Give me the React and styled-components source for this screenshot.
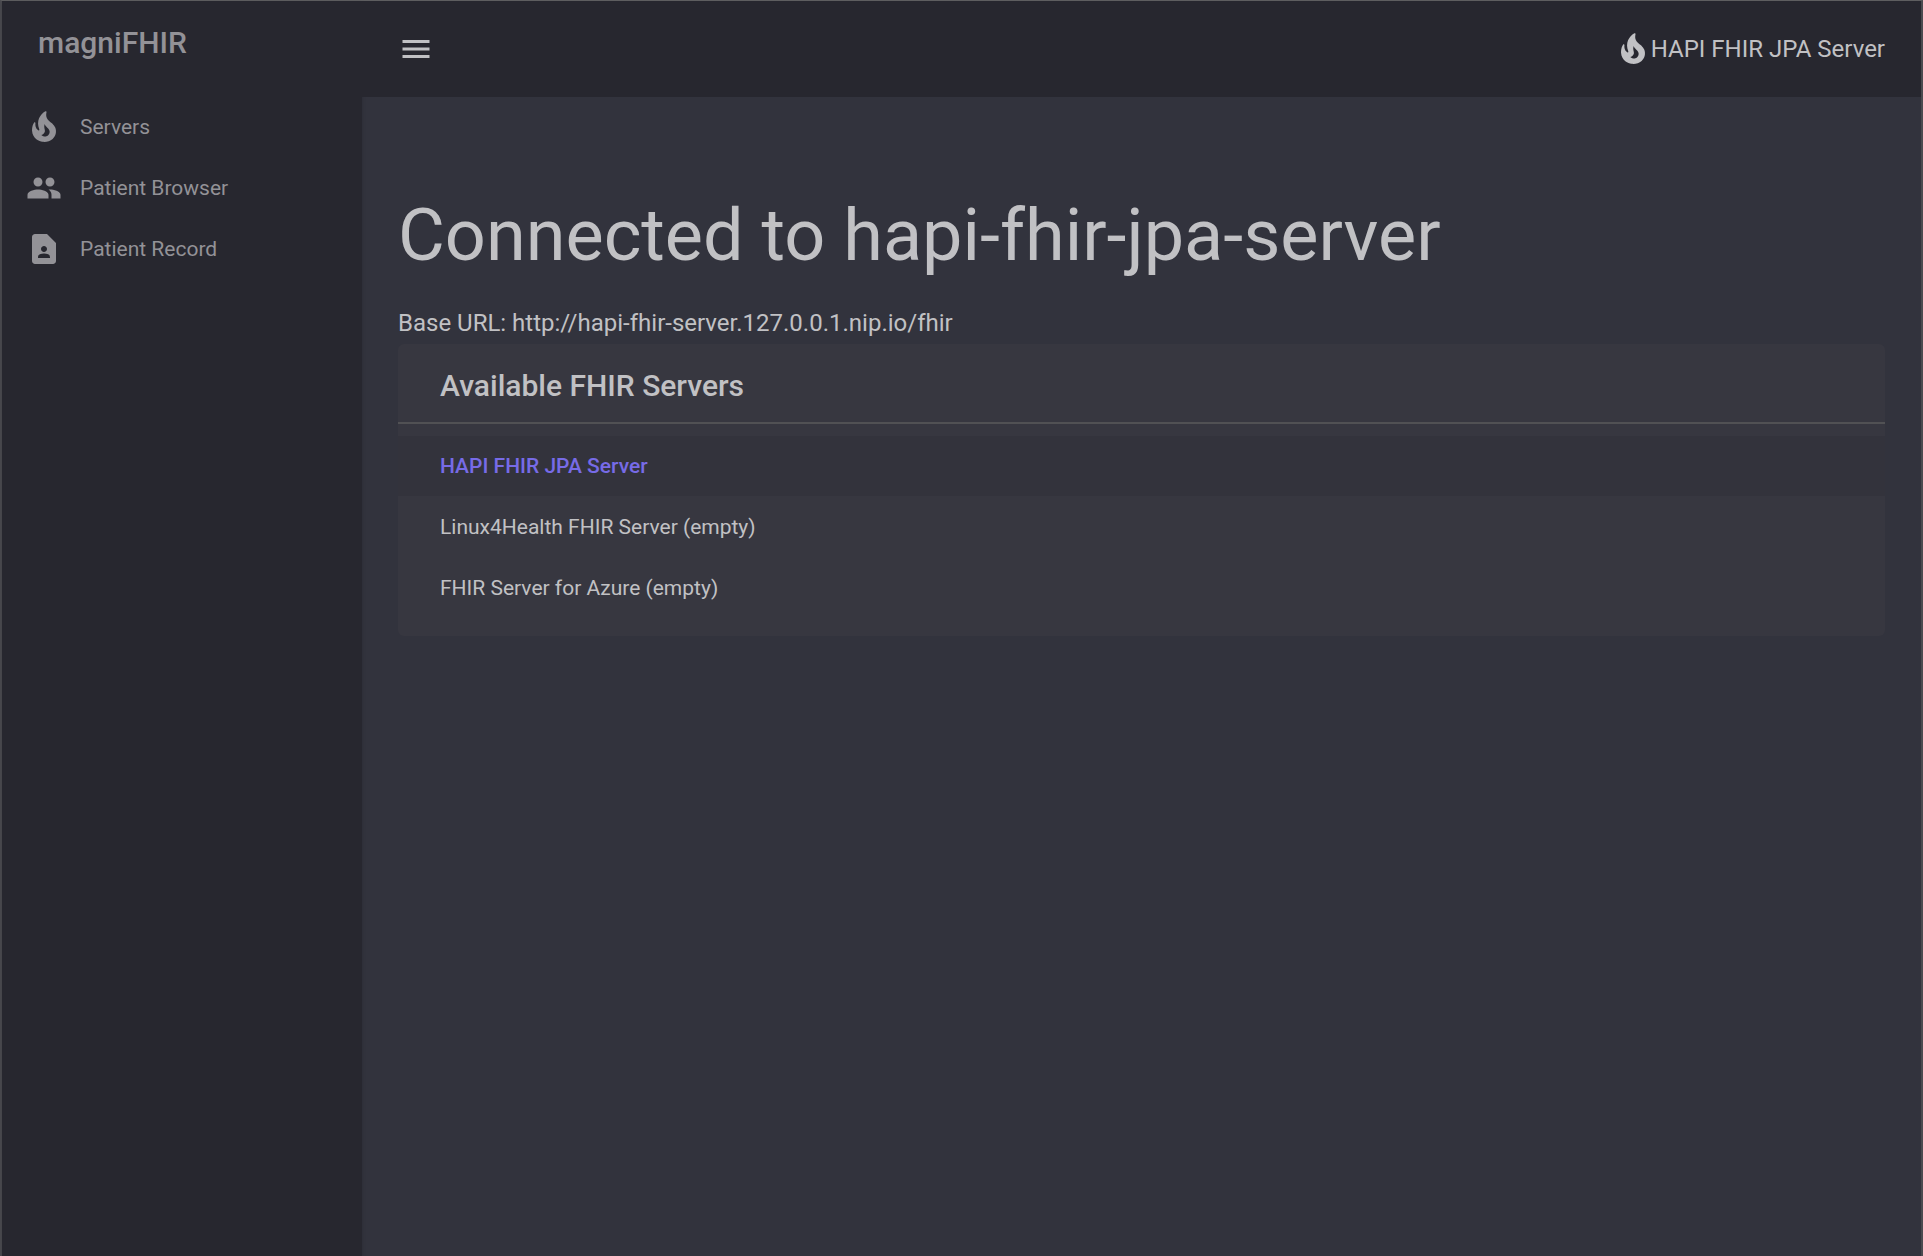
import React from "react";
import styled, { createGlobalStyle } from "styled-components";
import { MdPeople, MdContactPage, MdMenu } from "react-icons/md";

const GlobalStyle = createGlobalStyle`
  *, *::before, *::after { box-sizing: border-box; }
  body {
    margin: 0;
    background: #32333d;
    color: #c1c1c4;
    font-family: Roboto, "Liberation Sans", sans-serif;
    font-size: 24px;
    line-height: 36px;
  }
  h1, h2, p, ul { margin: 0; padding: 0; }
  ul { list-style: none; }
`;

const Shell = styled.div`
  display: flex;
  min-height: 100vh;
  border: solid #4a4a4f;
  border-width: 1px 2px 0;
  border-top-color: #5e5e60;
`;

const Drawer = styled.aside`
  flex: 0 0 360px;
  background: #27272f;
  color: #939297;
  box-shadow: 0 2px 4px rgba(0, 0, 0, 0.16);
`;

const Brand = styled.div`
  padding: 18px 36px;
  font-size: 30px;
  font-weight: 500;
  line-height: 48px;
`;

const Nav = styled.nav`
  padding: 11px 0;
`;

const NavLink = styled.a`
  display: flex;
  align-items: center;
  gap: 18px;
  height: 61px;
  padding: 0 24px;
  color: inherit;
  font-size: 21px;
  text-decoration: none;

  svg { width: 36px; height: 36px; }
`;

const Column = styled.div`
  flex: 1;
  min-width: 0;
`;

const AppBar = styled.header`
  position: relative;
  display: flex;
  align-items: center;
  justify-content: space-between;
  height: 96px;
  padding: 0 36px 0 18px;
  background: #27272f;
`;

const MenuButton = styled.button`
  display: flex;
  padding: 18px;
  border: 0;
  background: none;
  color: inherit;

  svg { width: 36px; height: 36px; }
`;

const CurrentServer = styled.div`
  display: flex;
  align-items: center;

  svg { width: 36px; height: 36px; }
`;

const Content = styled.main`
  padding: 96px 36px;
`;

const Title = styled.h1`
  margin-bottom: 26px;
  font-size: 72px;
  font-weight: 400;
  line-height: 86px;
`;

const Panel = styled.section`
  margin-top: 3px;
  border-radius: 6px;
  background: #373740;
`;

const PanelTitle = styled.h2`
  padding: 18px 42px 12px;
  border-bottom: 2px solid #515154;
  font-size: 30px;
  font-weight: 500;
  line-height: 48px;
`;

const ServerList = styled.ul`
  display: grid;
  gap: 1px;
  padding: 12px 0 18px;
`;

const ServerButton = styled.button`
  display: block;
  width: 100%;
  height: 60px;
  padding: 0 42px;
  border: 0;
  background: ${(p) => (p.$active ? "#33333c" : "none")};
  color: ${(p) => (p.$active ? "#776be7" : "inherit")};
  font: inherit;
  font-size: 21px;
  font-weight: ${(p) => (p.$active ? 500 : 400)};
  text-align: left;
`;

function FireIcon() {
  return (
    <svg viewBox="0 0 24 24" fill="currentColor" aria-hidden="true">
      <path d="M19.48,12.35c-1.57-4.08-7.16-4.3-5.81-10.23c0.1-0.44-0.37-0.78-0.75-0.55C9.29,3.71,6.68,8,8.87,13.62c0.18,0.46-0.36,0.89-0.75,0.59c-1.81-1.37-2-3.34-1.84-4.75c0.06-0.52-0.62-0.77-0.91-0.34C4.69,10.16,4,11.84,4,14.37c0.38,5.6,5.11,7.32,6.81,7.54c2.43,0.31,5.06-0.14,6.95-1.87C19.84,18.11,20.6,15.03,19.48,12.35z M10.2,17.38c1.44-0.35,2.18-1.39,2.38-2.31c0.33-1.43-0.96-2.83-0.09-5.09c0.33,1.87,3.27,3.04,3.27,5.08C15.84,17.59,13.1,19.76,10.2,17.38z" />
    </svg>
  );
}

const NAV = [
  { label: "Servers", Icon: FireIcon },
  { label: "Patient Browser", Icon: MdPeople },
  { label: "Patient Record", Icon: MdContactPage },
];

const SERVERS = [
  "HAPI FHIR JPA Server",
  "Linux4Health FHIR Server (empty)",
  "FHIR Server for Azure (empty)",
];

export default function App() {
  return (
    <>
      <GlobalStyle />
      <Shell>
        <Drawer>
          <Brand>magniFHIR</Brand>
          <Nav>
            {NAV.map(({ label, Icon }) => (
              <NavLink key={label} href="#">
                <Icon aria-hidden="true" />
                {label}
              </NavLink>
            ))}
          </Nav>
        </Drawer>
        <Column>
          <AppBar>
            <MenuButton type="button" aria-label="Toggle menu">
              <MdMenu aria-hidden="true" />
            </MenuButton>
            <CurrentServer>
              <FireIcon />
              {SERVERS[0]}
            </CurrentServer>
          </AppBar>
          <Content>
            <Title>Connected to hapi-fhir-jpa-server</Title>
            <p>Base URL: http://hapi-fhir-server.127.0.0.1.nip.io/fhir</p>
            <Panel>
              <PanelTitle>Available FHIR Servers</PanelTitle>
              <ServerList>
                {SERVERS.map((name, i) => (
                  <li key={name}>
                    <ServerButton type="button" $active={i === 0}>
                      {name}
                    </ServerButton>
                  </li>
                ))}
              </ServerList>
            </Panel>
          </Content>
        </Column>
      </Shell>
    </>
  );
}
